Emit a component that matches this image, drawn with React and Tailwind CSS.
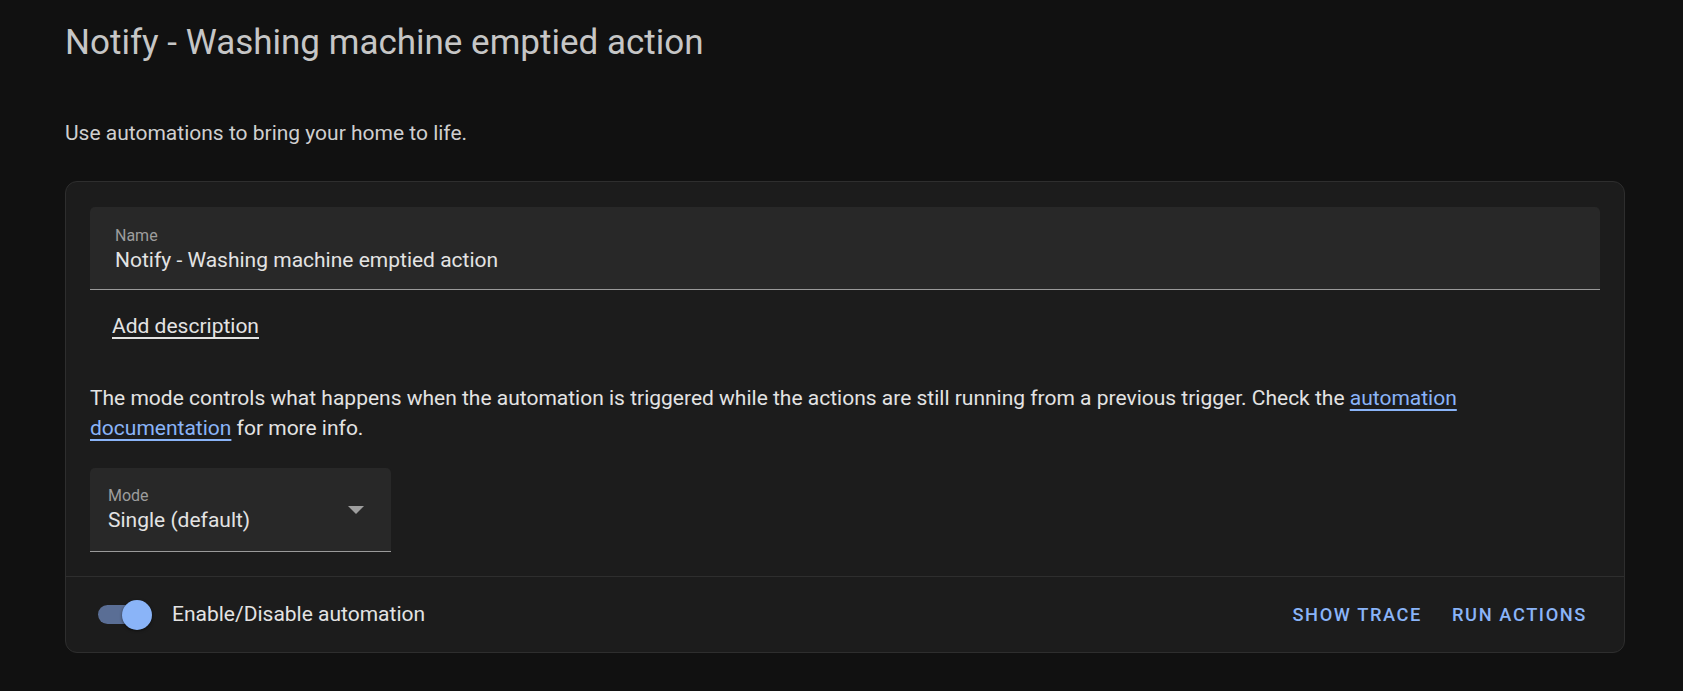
import { useState } from 'react';

const font = { fontFamily: 'Roboto, "Noto Sans", sans-serif' };

function Toggle({ checked, onChange }) {
  return (
    <button
      onClick={() => onChange(!checked)}
      className="relative w-[56px] h-[32px] flex items-center shrink-0"
    >
      <span
        className={`absolute left-[1px] w-[44px] h-[19px] rounded-full ${
          checked ? 'bg-[#5a6e95]' : 'bg-[#5f5f5f]'
        }`}
      />
      <span
        className={`absolute top-[1px] w-[30px] h-[30px] rounded-full shadow-[0_1px_3px_rgba(0,0,0,0.5)] ${
          checked ? 'left-[25px] bg-[#8ab4f8]' : 'left-0 bg-[#bdbdbd]'
        }`}
      />
    </button>
  );
}

export default function App() {
  const [enabled, setEnabled] = useState(true);

  return (
    <div className="min-h-screen bg-[#111111] pl-[65px] pr-[58px] pt-[22px]" style={font}>
      <h1 className="text-[35px] leading-[42px] text-[#c6c6c6] font-normal">
        Notify - Washing machine emptied action
      </h1>
      <p className="mt-[54px] text-[21px] leading-[30px] text-[#cfcfcf]">
        Use automations to bring your home to life.
      </p>

      <div className="mt-[33px] bg-[#1c1c1c] border border-[#2e2e2e] rounded-[12px]">
        <div className="px-[24px] pt-[25px] pb-[24px]">
          <div className="bg-[#282828] rounded-t-[5px] border-b border-[#9a9a9a] px-[25px] pt-[20px] pb-[17px]">
            <div className="text-[16px] leading-[18px] text-[#9d9d9d]">Name</div>
            <div className="mt-[3px] text-[21px] leading-[24px] text-[#e3e3e3]">
              Notify - Washing machine emptied action
            </div>
          </div>

          <div className="mt-[21px] px-[22px]">
            <button className="text-[21px] leading-[30px] text-[#e3e3e3] underline underline-offset-[4px] decoration-[1.5px]">
              Add description
            </button>
          </div>

          <p className="mt-[42px] text-[21px] leading-[30px] text-[#e3e3e3]">
            The mode controls what happens when the automation is triggered while the actions are still running from a previous trigger. Check the{' '}
            <a href="#" className="text-[#8ab4f8] underline underline-offset-[4px]">
              automation documentation
            </a>{' '}
            for more info.
          </p>

          <div className="mt-[25px] w-[301px] h-[84px] bg-[#282828] rounded-t-[5px] border-b border-[#9a9a9a] relative pl-[18px] pt-[19px]">
            <div className="text-[16px] leading-[18px] text-[#9d9d9d]">Mode</div>
            <div className="mt-[2px] text-[21px] leading-[26px] text-[#e3e3e3]">Single (default)</div>
            <svg
              className="absolute right-[27px] top-[38px]"
              width="16"
              height="8"
              viewBox="0 0 16 8"
            >
              <path d="M0 0 L16 0 L8 8 Z" fill="#9e9e9e" />
            </svg>
          </div>
        </div>

        <div className="border-t border-[#2e2e2e] h-[76px] flex items-center justify-between pl-[31px] pr-[27px]">
          <div className="flex items-center gap-[19px]">
            <Toggle checked={enabled} onChange={setEnabled} />
            <span className="text-[21px] text-[#e3e3e3]">Enable/Disable automation</span>
          </div>
          <div className="flex items-center gap-[10px]">
            <button className="px-[10px] h-[45px] text-[18.25px] font-medium tracking-[1.6px] text-[#8ab4f8] uppercase">
              Show trace
            </button>
            <button className="px-[10px] h-[45px] text-[18.25px] font-medium tracking-[1.6px] text-[#8ab4f8] uppercase">
              Run actions
            </button>
          </div>
        </div>
      </div>
    </div>
  );
}
